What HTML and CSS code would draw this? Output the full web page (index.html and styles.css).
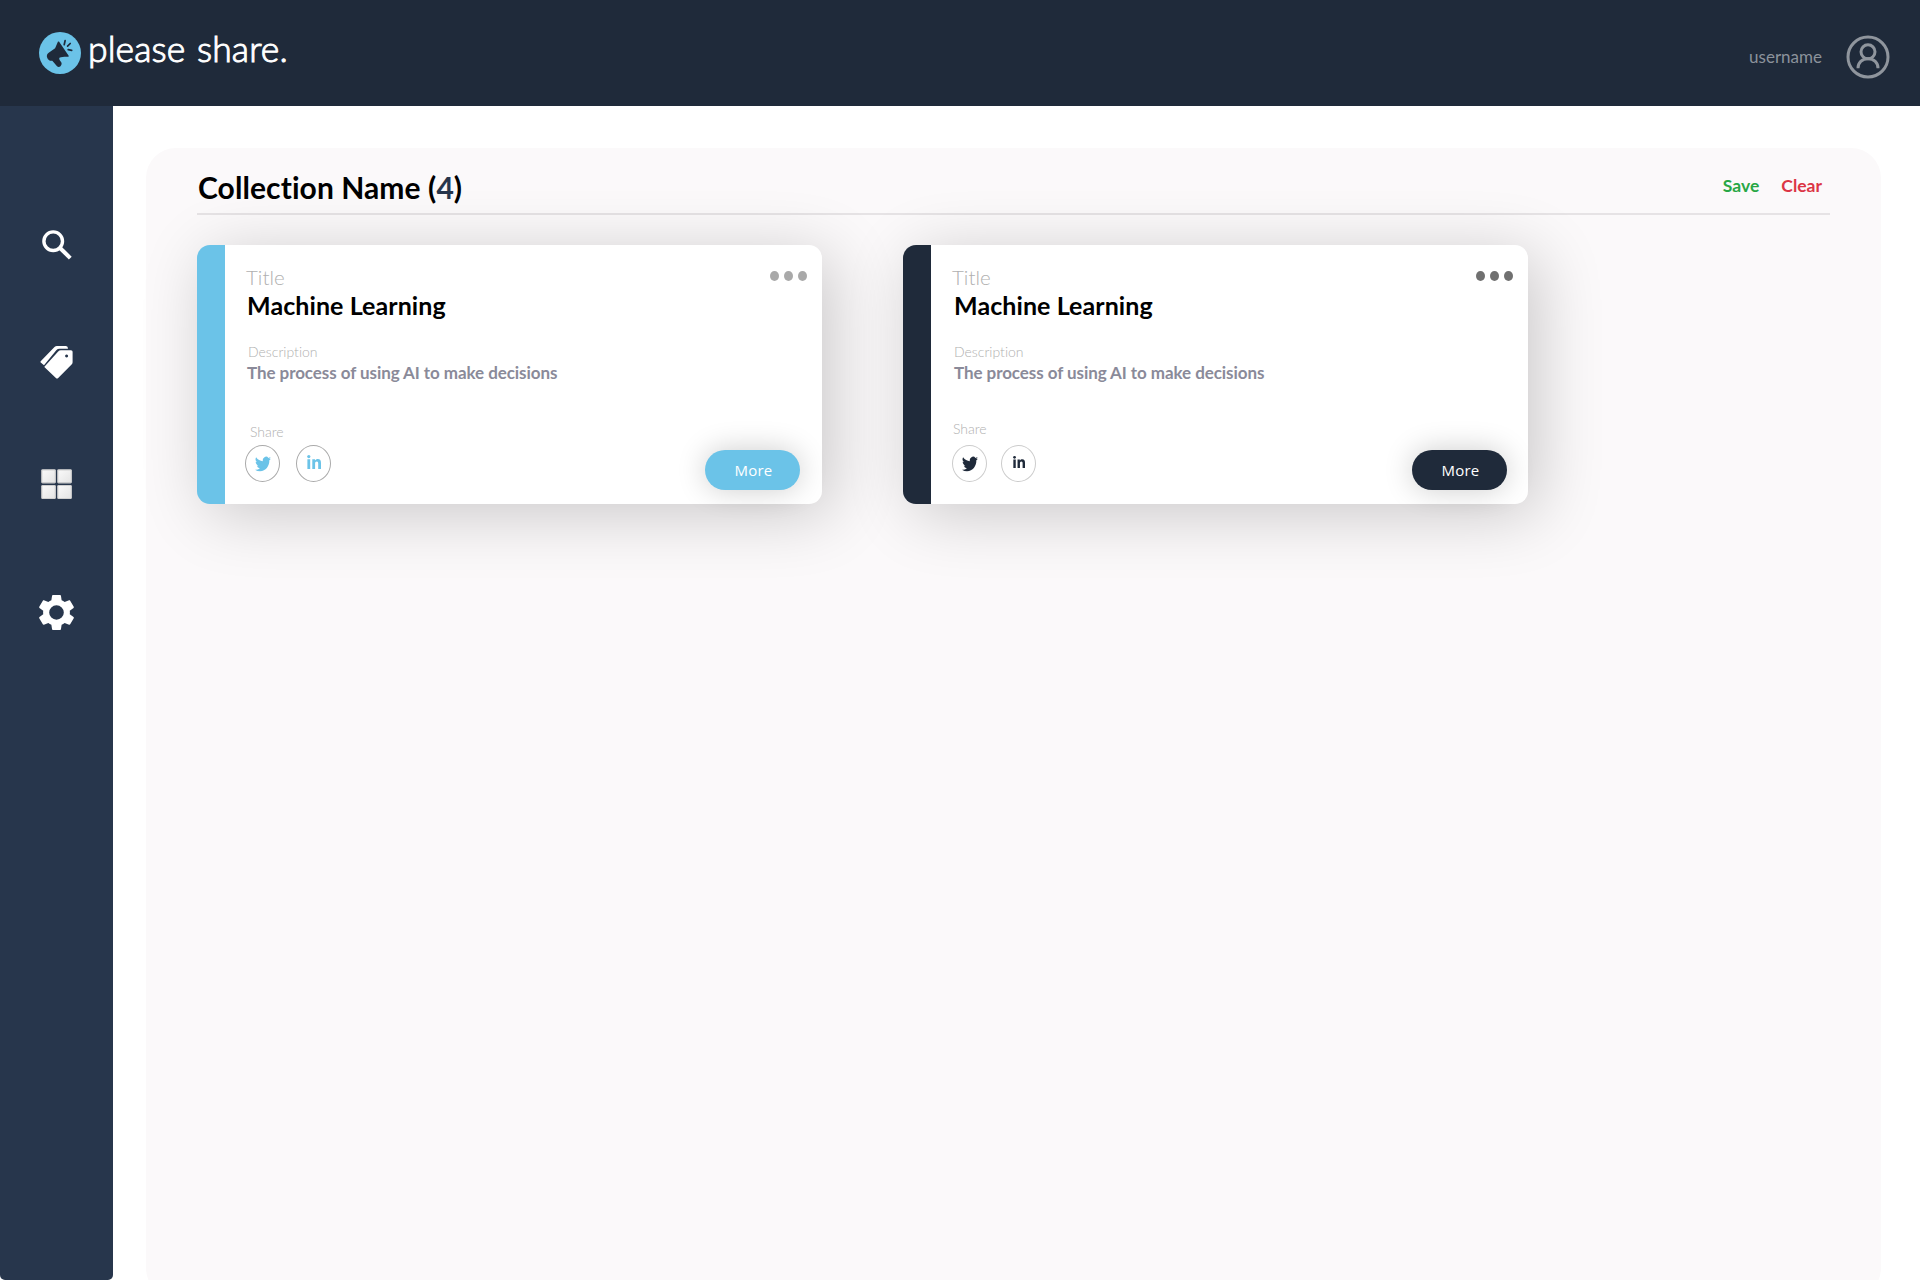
FILE: index.html
```html
<!DOCTYPE html>
<html lang="en">
<head>
<meta charset="utf-8">
<title>please share.</title>
<link rel="stylesheet" href="styles.css">
</head>
<body>
<svg width="0" height="0" class="defs" aria-hidden="true">
  <symbol id="twitter" viewBox="0 0 24 24" preserveAspectRatio="none"><path d="M24 4.6a10 10 0 0 1-2.8.8 5 5 0 0 0 2.1-2.700 10 10 0 0 1-3.100 1.200 4.900 4.900 0 0 0-8.400 4.500A14 14 0 0 1 1.700 3.100a4.900 4.900 0 0 0 1.500 6.600 4.900 4.900 0 0 1-2.200-.6c0 2.300 1.600 4.400 3.900 4.900a5 5 0 0 1-2.200.1 4.900 4.900 0 0 0 4.600 3.400A9.900 9.900 0 0 1 0 19.500a14 14 0 0 0 7.500 2.200c9.100 0 14.300-7.700 14-14.600A10 10 0 0 0 24 4.600z"/></symbol>
  <symbol id="linkedin" viewBox="0 0 14 14"><circle cx="1.800" cy="1.600" r="1.600"/><path d="M.4 4.200h2.800V14H.4zM5.300 4.200h2.700v1.300c.6-1 1.600-1.600 2.800-1.600 2.400 0 3.200 1.600 3.200 4V14h-2.800V8.600c0-1.300-.3-2.200-1.400-2.200-1.200 0-1.700.9-1.700 2.200V14H5.300z"/></symbol>
</svg>
<header class="topbar">
  <div class="brand">
    <svg class="brand-mark" viewBox="0 0 42 42">
      <circle cx="21" cy="21" r="21" fill="#6bc3e8"/>
      <path fill="#1f2a3a" d="M19 9.500c.8-.3 1.300.2 1.800 1.300l8.700 12.600c.5.900.2 1.300-.8 1.400-3-.1-6 .1-8.300 1-.5 1.100.2 2.500 1.300 3.700 1.600 1.900 1 3.200-.2 4.700-1.200 1.100-2.600 1-3.700-.3l-4.500-5.200c-2.300.6-4-.7-5-2.700-1-2.200-.3-4 1.400-5.200l6.400-4.600z"/>
      <path d="M25.200 12.700l.9-4M28.600 14.100l2.600-2.600M29.200 17.700l3.500.6" fill="none" stroke="#1f2a3a" stroke-width="1.700" stroke-linecap="round"/>
    </svg>
    <span class="brand-name">please share.</span>
  </div>
  <div class="user">
    <span class="user-name">username</span>
    <svg class="avatar" viewBox="0 0 44 44" fill="none" stroke="#8f959d" stroke-width="3">
      <circle cx="22" cy="22" r="20"/><circle cx="22" cy="16.800" r="7"/><path d="M12 33.200c0-5.500 4-9.400 10-9.400s10 3.900 10 9.400"/>
    </svg>
  </div>
</header>
<div class="layout">
  <nav class="sidebar">
    <svg class="nav-icon search" viewBox="0 0 30 30" fill="none" stroke="#fff"><circle cx="11.200" cy="11.200" r="9.300" stroke-width="3.400"/><path d="M18.300 18.300l10 9.800" stroke-width="4"/></svg>
    <svg class="nav-icon tags" viewBox="0 0 33 33" fill="#fff"><path d="M4 19.200l-3.300-2.600Q0 16 .7 15.200L14.500 1Q15.500 0 17 0h9q2 0 2 2.700h-8.500q-1.800 0-3 1.200z"/><path fill-rule="evenodd" d="M4.600 20.400L18.200 5.500q1.100-1.300 2.700-1.300H31q1.600 0 1.600 1.600v10.500q0 1.300-1 2.300L18.200 32q-1.200 1-2.300 0L4.600 21.200q-.5-.4 0-.8zM26.600 8.400a1.500 1.500 0 1 0 .01 0z"/></svg>
    <svg class="nav-icon grid" viewBox="0 0 31 31"><defs><linearGradient id="tile" x1="0" y1="0" x2="1" y2="1"><stop offset="0" stop-color="#fafafa"/><stop offset="1" stop-color="#e4e4e4"/></linearGradient></defs><g fill="url(#tile)" stroke="#cfcfcf" stroke-width="1.200"><rect x=".8" y=".8" width="13.500" height="13" rx=".8"/><rect x="16.800" y=".8" width="13.500" height="13" rx=".8"/><rect x=".8" y="16.500" width="13.500" height="13" rx=".8"/><rect x="16.800" y="16.500" width="13.500" height="13" rx=".8"/></g></svg>
    <svg class="nav-icon gear" viewBox="2.200 2 19.600 20" preserveAspectRatio="none" fill="#fff"><path d="M19.430 12.980c.04-.32.07-.64.07-.98s-.03-.66-.07-.98l2.110-1.650c.19-.15.24-.42.12-.64l-2-3.460c-.12-.22-.39-.3-.61-.22l-2.490 1c-.52-.4-1.080-.73-1.690-.98l-.38-2.650C14.460 2.180 14.250 2 14 2h-4c-.25 0-.46.18-.49.42l-.38 2.650c-.61.25-1.170.59-1.690.98l-2.490-1c-.23-.09-.49 0-.61.22l-2 3.460c-.13.22-.07.49.12.64l2.110 1.650c-.04.32-.07.65-.07.98s.03.66.07.98l-2.110 1.650c-.19.15-.24.42-.12.64l2 3.460c.12.22.39.3.61.22l2.490-1c.52.4 1.080.73 1.690.98l.38 2.650c.03.24.24.42.49.42h4c.25 0 .46-.18.49-.42l.38-2.650c.61-.25 1.170-.59 1.690-.98l2.490 1c.23.09.49 0 .61-.22l2-3.460c.12-.22.07-.49-.12-.64zM12 16.100a4.100 4.100 0 1 1 0-8.200 4.100 4.100 0 0 1 0 8.200z"/></svg>
  </nav>
  <main class="panel">
    <div class="panel-head">
      <h1>Collection Name (<span>4</span>)</h1>
      <div class="actions"><a class="save">Save</a><a class="clear">Clear</a></div>
    </div>
    <div class="cards">
      <article class="card light">
        <div class="card-body">
          <div class="label title-label">Title</div>
          <h2>Machine Learning</h2>
          <div class="label desc-label">Description</div>
          <p>The process of using AI to make decisions</p>
          <div class="label share-label">Share</div>
          <div class="socials"><a class="social"><svg class="tw"><use href="#twitter"/></svg></a><a class="social"><svg class="li"><use href="#linkedin"/></svg></a></div>
        </div>
        <div class="card-side"><div class="dots"><i></i><i></i><i></i></div><a class="more">More</a></div>
      </article>
      <article class="card dark">
        <div class="card-body">
          <div class="label title-label">Title</div>
          <h2>Machine Learning</h2>
          <div class="label desc-label">Description</div>
          <p>The process of using AI to make decisions</p>
          <div class="label share-label">Share</div>
          <div class="socials"><a class="social"><svg class="tw"><use href="#twitter"/></svg></a><a class="social"><svg class="li"><use href="#linkedin"/></svg></a></div>
        </div>
        <div class="card-side"><div class="dots"><i></i><i></i><i></i></div><a class="more">More</a></div>
      </article>
    </div>
  </main>
</div>
</body>
</html>
```
FILE: styles.css
```css
* { box-sizing: border-box; }
body { margin: 0; height: 1280px; overflow: hidden; background: #fff; font-family: Lato, "Liberation Sans", sans-serif; color: #000; font-variant-ligatures: none; }
svg { display: block; flex: none; }
.defs { position: absolute; }
h1, h2, p { margin: 0; white-space: nowrap; }

.topbar { height: 106px; background: #1f2a3a; display: flex; justify-content: space-between; padding: 32px 30px 0 39px; }
.brand { display: flex; gap: 7px; }
.brand-mark { width: 42px; height: 42px; }
.brand-name { font-size: 35.5px; line-height: 42px; margin-top: -4px; font-weight: 300; color: #fff; white-space: nowrap; letter-spacing: .1px; word-spacing: 2px; -webkit-text-stroke: 1px #fff; }
.user { display: flex; gap: 24px; margin-top: 3px; }
.user-name { font-size: 17px; line-height: 44px; color: #8b929b; }
.avatar { width: 44px; height: 44px; }

.layout { display: flex; height: 1174px; }
.sidebar { width: 113px; height: 1174px; flex: none; background: #27364c; border-radius: 0 0 5px 5px; display: flex; flex-direction: column; align-items: center; padding-top: 124px; }
.search { width: 30px; height: 30px; }
.tags { width: 33px; height: 33px; margin-top: 86px; }
.grid { width: 31px; height: 31px; margin-top: 90px; }
.gear { width: 35px; height: 35px; margin-top: 95px; }

.panel { width: 1735px; height: 1150px; flex: none; margin: 42px 0 0 33px; padding: 19px 51px 0 51px; background: #fbf9fa; border-radius: 30px; }
.panel-head { height: 48px; border-bottom: 2px solid #e6e3e5; display: flex; justify-content: space-between; padding: 0 8px 0 1px; }
h1 { font-size: 30px; line-height: 40px; font-weight: 700; letter-spacing: .08px; }
h1 span { color: #27364c; }
.actions { display: flex; gap: 22px; font-size: 17.5px; line-height: 37px; font-weight: 700; }
.save { color: #28a745; }
.clear { color: #dc3545; }

.cards { display: flex; gap: 81px; margin-top: 30px; }
.card { width: 625px; height: 259px; display: flex; justify-content: space-between; background: #fff; border-left: 28px solid var(--accent); border-radius: 13px; box-shadow: 10px 10px 66px rgba(0, 0, 0, .2); }
.light { --accent: #6bc3e8; --ring: #aaa; --dot: #a9a9a9; }
.dark { --accent: #1f2a3a; --ring: #ccc; --dot: #707070; }
.card-body { padding: 19px 0 0 21px; }
.label { font-weight: 300; color: #b0b0b0; }
.title-label { font-size: 20.5px; line-height: 26px; }
h2 { font-size: 25px; line-height: 30px; font-weight: 700; letter-spacing: .08px; padding-left: 1px; }
.desc-label { font-size: 14px; line-height: 18px; margin-top: 23px; padding-left: 2px; }
p { font-size: 17px; line-height: 24px; font-weight: 700; letter-spacing: -.07px; color: #8a8a99; padding-left: 1px; }
.share-label { font-size: 14px; line-height: 18px; margin-top: 38px; padding-left: 4px; }
.socials { display: flex; gap: 16px; margin: 4px 0 0 -1px; }
.social { width: 35px; height: 37px; border: 1px solid var(--ring); border-radius: 50%; display: flex; align-items: center; justify-content: center; fill: var(--accent); }
.tw { width: 16px; height: 18px; }
.li { width: 14px; height: 14px; margin: -3px 0 0 1px; }
.dark h2, .dark p { padding-left: 2px; }
.dark .share-label { margin-top: 35px; padding-left: 1px; }
.dark .socials { gap: 14px; margin: 7px 0 0; }
.dark .li { width: 12px; height: 12px; }
.card-side { display: flex; flex-direction: column; align-items: flex-end; justify-content: space-between; padding: 26px 15px 14px 0; }
.dots { display: flex; gap: 5px; }
.dots i { width: 9px; height: 10px; border-radius: 50%; background: var(--dot); }
.more { width: 95px; height: 40px; margin-right: 7px; border-radius: 20px; background: var(--accent); color: #fff; font: 400 15px/40px "Open Sans", "Noto Sans", sans-serif; letter-spacing: .2px; padding-left: 2px; text-align: center; box-shadow: 0 0 30px rgba(0, 0, 0, .2); }
.dark .more { margin-right: 6px; }
```
